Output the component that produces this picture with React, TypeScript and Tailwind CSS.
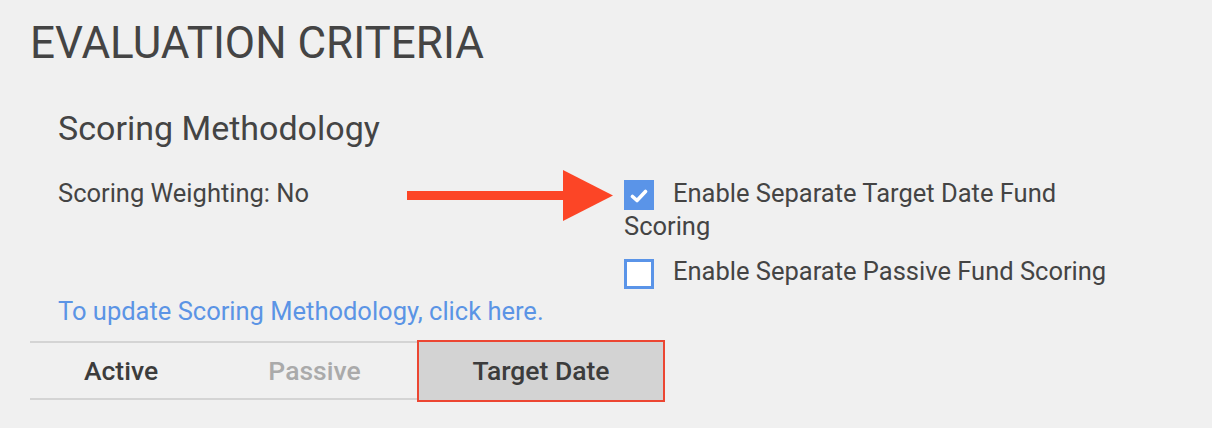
function Box({ checked }: { checked?: boolean }) {
  return checked ? (
    <span className="inline-block overflow-hidden w-[30px] h-[30px] bg-[#5a94e8] align-[-8px] mr-[19px]">
      <svg width="18" height="14" viewBox="0 0 18 14" className="block mx-auto mt-[9px]">
        <polyline
          points="2.5,7.5 7,11.5 15.5,2.5"
          fill="none"
          stroke="#fff"
          strokeWidth="3.6"
          strokeLinecap="round"
          strokeLinejoin="round"
        />
      </svg>
    </span>
  ) : (
    <span className="inline-block w-[30px] h-[30px] border-[3px] border-[#5a94e8] bg-white align-[-9px] mr-[19px]"></span>
  );
}

export default function App() {
  return (
    <div className="w-[1212px] h-[428px] bg-[#f0f0f0] text-[#444] font-['Roboto',sans-serif] overflow-hidden">
      <h1 className="pl-[30px] pt-[17px] text-[44px] leading-[52px]">EVALUATION CRITERIA</h1>

      <div className="pl-[58px] pt-[39px]">
        <h2 className="text-[34px] leading-[40px]">Scoring Methodology</h2>

        <div className="flex mt-[29px] text-[25.5px] leading-[32px]">
          <div className="w-[349px]">Scoring Weighting: No</div>
          <svg width="206" height="52" viewBox="0 0 206 52" className="mt-[-7px] shrink-0">
            <rect x="0" y="21" width="158" height="9" fill="#fc4526" />
            <polygon points="156,0 206,25.5 156,51" fill="#fc4526" />
          </svg>
          <div className="ml-[11px] w-[500px]">
            <p>
              <Box checked />
              Enable Separate Target Date Fund Scoring
            </p>
            <p className="mt-[13px]">
              <Box />
              Enable Separate Passive Fund Scoring
            </p>
          </div>
        </div>

        <a className="block mt-[6px] text-[25.5px] leading-[32px] text-[#5b94e5]">
          To update Scoring Methodology, click here.
        </a>
      </div>

      <div className="ml-[30px] mt-[14px] w-[635px] h-[59px] flex border-y-2 border-[#d4d4d4] text-[26.5px] font-medium text-[#3c3c3c]">
        <div className="w-[182px] flex items-center justify-center">Active</div>
        <div className="w-[205px] flex items-center justify-center text-[#aaa]">Passive</div>
        <div className="flex-1 -mt-[3px] -mb-[4px] flex items-center justify-center bg-[#d3d3d3] border-2 border-[#ec4632]">
          Target Date
        </div>
      </div>
    </div>
  );
}
